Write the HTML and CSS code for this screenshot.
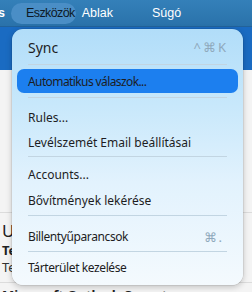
FILE: index.html
```html
<!DOCTYPE html>
<html>
<head>
<meta charset="utf-8">
<link rel="stylesheet" href="styles.css">
</head>
<body>
<div class="screen">
  <div class="menubar">
    <span class="mb-item cut">s</span>
    <span class="mb-item active">Eszközök</span>
    <span class="mb-item">Ablak</span>
    <span class="mb-item">Súgó</span>
  </div>
  <div class="toolbar"></div>
  <div class="content">
    <div class="row">
      <div class="r-title">U</div>
      <div class="r-bold">Te</div>
      <div class="r-text">Te</div>
    </div>
    <div class="row2">Microsoft Outlook Csapat <span class="dot"></span></div>
  </div>

  <div class="menu">
    <div class="item big"><span>Sync</span><span class="sc">^⌘K</span></div>
    <div class="sep s1"></div>
    <div class="item hl"><span class="tight">Automatikus válaszok...</span></div>
    <div class="sep s2"></div>
    <div class="item"><span>Rules...</span></div>
    <div class="item"><span>Levélszemét Email beállításai</span></div>
    <div class="sep s3"></div>
    <div class="item"><span>Accounts...</span></div>
    <div class="item b"><span>Bővítmények lekérése</span></div>
    <div class="sep s4"></div>
    <div class="item"><span class="tight2">Billentyűparancsok</span><span class="sc sm">⌘.</span></div>
    <div class="sep s5"></div>
    <div class="item"><span class="tight2">Tárterület kezelése</span></div>
  </div>
</div>
</body>
</html>
```
FILE: styles.css
```css
* { box-sizing: border-box; }
html, body { margin: 0; padding: 0; }
body {
  width: 252px;
  height: 292px;
  overflow: hidden;
  font-family: "Noto Sans", "Liberation Sans", sans-serif;
  background: #f3f3f3;
}
.screen {
  position: relative;
  width: 252px;
  height: 292px;
  overflow: hidden;
  display: flex;
  flex-direction: column;
}
.menubar {
  height: 27px;
  flex: none;
  background: linear-gradient(#3480b9, #2a72aa);
  border-bottom: 1px solid #22629a;
  display: flex;
  align-items: center;
  color: #fff;
  font-family: "Liberation Sans", sans-serif;
  font-size: 12.5px;
}
.mb-item { line-height: 21px; }
.mb-item.cut { margin-left: -2px; font-weight: bold; width: 13px; }
.mb-item.active {
  background: #4a8ec6;
  color: #0d1a26;
  border-radius: 11px;
  padding: 0 1px 0 15px;
  margin-right: 6px;
  letter-spacing: -0.6px;
}
.mb-item + .mb-item + .mb-item { margin-right: 39px; }
.toolbar {
  height: 43px;
  flex: none;
  background: #1a6bc2;
}
.content {
  flex: 1;
  background: #f4f4f4;
  position: relative;
}
.row {
  margin-top: 142px;
  padding-left: 2px;
  border-top: 1px solid #dcdcdc;
  padding-top: 7px;
  height: 70px;
}
.r-title { font-size: 17px; color: #222; line-height: 22px; }
.r-bold { font-size: 13px; font-weight: bold; color: #222; line-height: 17px; }
.r-text { font-size: 13px; color: #333; line-height: 17px; }
.row2 {
  border-top: 1px solid #dcdcdc;
  padding-top: 3px;
  padding-left: 2px;
  font-size: 13px;
  font-weight: bold;
  color: #222;
  line-height: 18px;
  white-space: nowrap;
}
.dot {
  display: inline-block;
  width: 8px; height: 8px;
  border-radius: 50%;
  background: #1a6dc0;
  margin-left: 12px;
}

.menu {
  position: absolute;
  left: 12px;
  top: 29px;
  width: 231px;
  height: 256px;
  border-radius: 11px;
  background: linear-gradient(#b1ddf9 0%, #c8e8fb 30%, #e2f2fd 60%, #f4fafe 100%);
  box-shadow: 0 2px 6px rgba(0,0,0,0.22), 0 0 0 0.5px rgba(0,0,0,0.12);
  padding: 5px 5px 4px;
  display: flex;
  flex-direction: column;
  font-size: 12px;
  color: #1d1d1f;
}
.item {
  display: flex;
  justify-content: space-between;
  align-items: center;
  height: 25px;
  padding: 0 12px 0 11px;
  border-radius: 7px;
  white-space: nowrap;
  flex: none;
}
.item.big { font-size: 14px; height: 26px; }
.item.hl { background: #1c7fef; height: 24px; }
.item.b { margin-top: 1px; }
.tight { letter-spacing: -0.6px; }
.tight2 { letter-spacing: -0.4px; }
.sc { color: #8fa9bc; font-size: 13px; letter-spacing: 2px; margin-right: -2px; }
.sc.sm { margin-right: 2px; }
.sep {
  height: 1px;
  background: #c2d5e2;
  margin: 4px 11px;
  flex: none;
}
.s2 { margin-bottom: 7px; }
.s3 { margin-top: 1px; margin-bottom: 5px; }
.s4 { margin-top: 2px; margin-bottom: 8px; }
.s5 { margin-top: 2px; margin-bottom: 3px; }
```
